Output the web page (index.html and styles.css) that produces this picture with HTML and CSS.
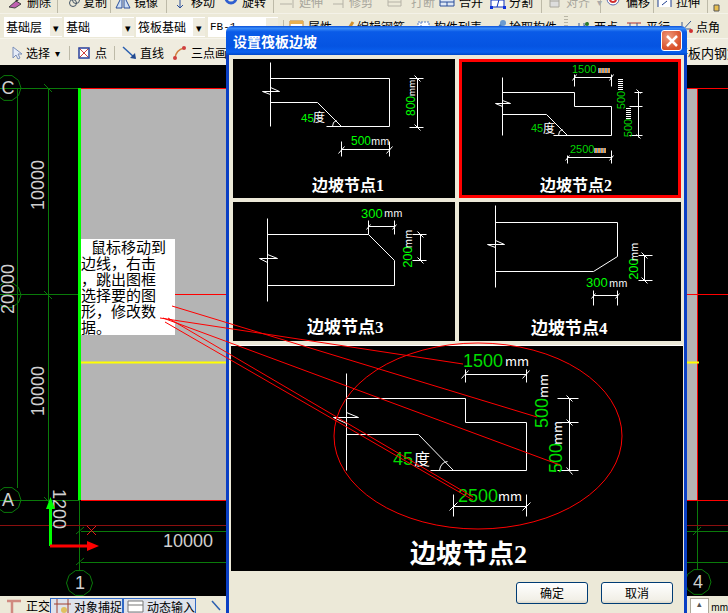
FILE: index.html
```html
<!DOCTYPE html>
<html lang="zh">
<head>
<meta charset="utf-8">
<title>设置筏板边坡</title>
<link rel="stylesheet" href="styles.css">
</head>
<body>
<div class="app">
  <div class="tb tb1">
    <div class="it"><svg width="17" height="14" viewBox="0 0 17 14"><path d="M2 12 L9 6 L14 9 L8 13Z" fill="#c060b0" stroke="#444"/><path d="M9 6 L14 2" stroke="#333" stroke-width="2"/></svg><span>删除</span></div><i class="sep s12"></i>
    <div class="it"><svg width="11" height="14" viewBox="0 0 11 14"><circle cx="4" cy="8" r="3.500" fill="none" stroke="#456"/><circle cx="7" cy="5" r="3.500" fill="none" stroke="#456"/></svg><span>复制</span></div><i class="sep s5"></i>
    <div class="it"><svg width="16" height="14" viewBox="0 0 16 14"><path d="M7 1 L1 13 H7Z M9 1 L15 13 H9Z" fill="#cfe0f5" stroke="#2a4f9a"/></svg><span>镜像</span></div><i class="sep s7"></i>
    <div class="it"><svg width="15" height="14" viewBox="0 0 15 14"><path d="M7 0 V13 M4 10 L7 13 L10 10 M1 4 H13" fill="none" stroke="#2a4f9a"/></svg><span>移动</span></div>
    <div class="it"><svg width="15" height="14" viewBox="0 0 15 14"><circle cx="7" cy="3" r="5" fill="none" stroke="#2f5fd0" stroke-width="3"/></svg><span>旋转</span></div><i class="sep s7"></i>
    <div class="it off"><svg width="16" height="14" viewBox="0 0 16 14"><path d="M0 4 H12 M0 9 H12 M13 0 V13" fill="none" stroke="#b5b2a6"/></svg><span>延伸</span></div>
    <div class="it off"><svg width="13" height="14" viewBox="0 0 13 14"><path d="M0 4 H10 M0 9 H10 M10 0 V13" fill="none" stroke="#b5b2a6"/></svg><span>修剪</span></div>
    <div class="it off"><svg width="21" height="14" viewBox="0 0 21 14"><path d="M1 3 H14 V11 H1Z M1 7 H14" fill="none" stroke="#b5b2a6"/></svg><span>打断</span></div>
    <div class="it"><svg width="17" height="14" viewBox="0 0 17 14"><path d="M1 4 H15 V11 H1Z M1 7 H15 M8 7 V11" fill="#dfe8f5" stroke="#2a4f9a"/></svg><span>合并</span></div>
    <div class="it"><svg width="17" height="14" viewBox="0 0 17 14"><path d="M2 5 H15 V12 H2Z M8 12 L11 1" fill="#fff" stroke="#1133bb"/><path d="M1 11h3v3h-3z M14 11h3v3h-3z" fill="#1133dd"/></svg><span>分割</span></div><i class="sep s7"></i>
    <div class="it off"><svg width="15" height="14" viewBox="0 0 15 14"><path d="M2 1 H11 V12 H2Z M2 6 H11" fill="#ddd" stroke="#a8a69c"/></svg><span>对齐</span><b class="mini">▾</b></div><i class="sep s6"></i>
    <div class="it"><svg width="17" height="14" viewBox="0 0 17 14"><circle cx="7" cy="4" r="6" fill="#fff" stroke="#5a6cb0"/><circle cx="7" cy="4" r="3" fill="none" stroke="#d03030" stroke-width="2"/></svg><span>偏移</span></div><i class="sep s4"></i>
    <div class="it"><svg width="16" height="14" viewBox="0 0 16 14"><path d="M1 12 V2 H14 V12" fill="#fff" stroke="#1f3f8f"/><path d="M5 10 L10 6" stroke="#1f3f8f"/></svg><span>拉伸</span></div><i class="sep s5"></i>
    <svg width="14" height="14" viewBox="0 0 14 14"><path d="M2 6h5v6H2z" fill="#e8c050" stroke="#555"/></svg>
  </div>

  <div class="tb tb2">
    <div class="sel s-a"><span>基础层</span><b>▾</b></div>
    <div class="sel s-b"><span>基础</span><b>▾</b></div>
    <div class="sel s-c"><span>筏板基础</span><b>▾</b></div>
    <div class="sel s-d"><span class="mono">FB-1</span><b>▾</b></div>
    <i class="sep s6"></i>
    <div class="it a1"><svg width="16" height="16" viewBox="0 0 16 16"><path d="M1 2h13v12H1z" fill="#fff" stroke="#c08030"/><path d="M1 2h13v3H1z" fill="#e9b050"/></svg><span>属性</span></div>
    <div class="it a2"><svg width="10" height="16" viewBox="0 0 10 16"><path d="M1 14 L8 3" stroke="#d09030" stroke-width="3"/></svg><span>编辑钢筋</span></div>
    <div class="it a3"><svg width="15" height="16" viewBox="0 0 15 16"><path d="M2 3h11v10H2z M5 3v10 M5 8h8" fill="#fff" stroke="#5a7ec0" stroke-dasharray="2 1"/></svg><span>构件列表</span></div>
    <div class="it a4"><svg width="12" height="16" viewBox="0 0 12 16"><path d="M1 14 L8 5" stroke="#3a6fb0" stroke-width="3"/><circle cx="9" cy="4" r="3" fill="#6a9ad0"/></svg><span>拾取构件</span></div>
    <i class="grip"></i>
    <div class="it a5"><svg width="15" height="16" viewBox="0 0 15 16"><path d="M3 4 V14 M8 4 V14 M0 11 H13 M2 14 L12 3" fill="none" stroke="#3a5a90"/><circle cx="11" cy="5" r="2" fill="#2a7a2a"/></svg><span>两点</span></div>
    <div class="it a6"><svg width="17" height="16" viewBox="0 0 17 16"><path d="M1 4 H15" stroke="#b03030"/><path d="M4 4 V14 M11 4 V14 M1 10 H15" stroke="#3a5a90" fill="none"/></svg><span>平行</span></div>
    <div class="it a7"><svg width="14" height="16" viewBox="0 0 14 16"><path d="M3 3 V14 M0 10 H12 M1 14 L12 2" fill="none" stroke="#3a5a90"/><circle cx="12" cy="12" r="2" fill="#d03030"/></svg><span>点角</span></div>
  </div>

  <div class="tb tb3">
    <div class="it b1"><svg width="16" height="16" viewBox="-3 0 16 16"><path d="M3 2 V13 L6 10 L8 14 L10 13 L8 9 H12Z" fill="#e6ecf8" stroke="#7a8fb8"/></svg><span>选择</span><b class="mini dark">▾</b></div><i class="sep s9"></i>
    <div class="it b2"><svg width="12" height="16" viewBox="0 0 12 16"><rect x="1" y="3" width="10" height="10" fill="#fff" stroke="#2a3f9a" stroke-width="1.500"/><path d="M2 4 L10 12 M10 4 L2 12" stroke="#d04040"/></svg><span>点</span></div><i class="sep s8"></i>
    <div class="it b3"><svg width="15" height="16" viewBox="0 0 15 16"><path d="M1 2 L13 13" stroke="#2a5fb0" stroke-width="1.500"/><path d="M14 14 L8 13 L13 8Z" fill="#234a90"/></svg><span>直线</span></div>
    <div class="it b4"><svg width="16" height="16" viewBox="0 0 16 16"><path d="M3 13 Q4 5 12 3" fill="none" stroke="#d08040" stroke-width="1.500"/><circle cx="3" cy="13" r="2" fill="#d04040"/><circle cx="12" cy="3" r="2" fill="#d04040"/></svg><span>三点画弧</span></div>
    <span class="cut">开板内钢筋</span>
  </div>

  <main class="canvas">
    <svg class="cad" width="728" height="531" viewBox="0 65 728 531">
      <defs>
        <polygon id="ring" points="13,0 10.500,7.600 4,12.400 -4,12.400 -10.500,7.600 -13,0 -10.500,-7.600 -4,-12.400 4,-12.400 10.500,-7.600"/>
      </defs>
      <rect class="gray" x="81" y="88" width="616" height="412"/>
      <g class="grid">
        <path d="M0 88.500H78 M0 294.500H80 M0 500.500H80 M17.500 88V488 M48.500 88V500 M79.500 500V571 M697.500 500V570 M81 531.500H728 M81 562.500H728"/>
        <path d="M44 84L52 92 M44 291L52 299 M44 497L52 505 M76 534L84 527 M76 565L84 558 M693 535L701 527"/>
      </g>
      <path class="dred" d="M0 525.500H728"/>
      <path class="red" d="M81 88.500H728 M81 294.500H728 M81 500.500H728 M697.500 88V500"/>
      <path class="yel" d="M81 362.500H699"/>
      <rect class="gbar" x="78" y="88" width="3" height="412"/>
      <g class="rings">
        <use href="#ring" x="8" y="88"/><use href="#ring" x="8" y="295"/><use href="#ring" x="8" y="500"/>
        <use href="#ring" x="79.500" y="583"/><use href="#ring" x="698" y="582"/>
      </g>
      <g class="cadtxt">
        <text x="38" y="185" transform="rotate(-90 38 185)" class="mid">10000</text>
        <text x="38" y="391" transform="rotate(-90 38 391)" class="mid">10000</text>
        <text x="8" y="289" transform="rotate(-90 8 289)" class="mid">20000</text>
        <text x="59" y="509" transform="rotate(90 59 509)" class="mid">1200</text>
        <text x="163" y="547">10000</text>
        <text x="8" y="94" class="ctr">C</text>
        <text x="8" y="506" class="ctr">A</text>
        <text x="80" y="589" class="ctr">1</text>
        <text x="698" y="588" class="ctr">4</text>
      </g>
      <path class="red xm" d="M87 526L96 535 M96 526L87 535"/>
      <rect class="gbar2" x="49" y="505" width="3" height="41"/>
      <path class="gbar2" d="M50.500 497L46 509H55Z"/>
      <rect class="rbar" x="50" y="544.500" width="38" height="3"/>
      <path class="rbar" d="M99 546L87 541V551Z"/>
    </svg>
    <div class="note"><span class="ind"></span>鼠标移动到<br>边线&#xFF0C;右击<br>&#xFF0C;跳出图框<br>选择要的图<br>形&#xFF0C;修改数<br>据&#x3002;</div>
  </main>

  <footer class="status">
    <div class="st"><svg width="17" height="14" viewBox="0 0 17 14"><path d="M1 2H15 M6 2V14" stroke="#d08a80" stroke-width="2.500" fill="none"/></svg><span>正交</span></div>
    <div class="st on"><svg width="17" height="14" viewBox="0 0 17 14"><path d="M3 0V14 M14 0V14 M0 5H17" stroke="#a04030" fill="none"/><circle cx="10" cy="11" r="3" fill="#e0c060"/></svg><span>对象捕捉</span></div>
    <div class="st on"><svg width="17" height="14" viewBox="0 0 17 14"><path d="M1 2H16V13H1Z M1 6H16" stroke="#777" fill="#fff"/></svg><span>动态输入</span></div>
    <svg class="st-ic" width="12" height="14" viewBox="0 0 12 14"><path d="M2 2L10 11" stroke="#2a5fb0" stroke-width="1.500"/></svg>
    <div class="spin"><b>▴</b></div><span class="unit">mm</span>
  </footer>
</div>

<section class="dlg">
  <header class="dlg-t"><span>设置筏板边坡</span><button class="x" aria-label="关闭"><svg width="14" height="14" viewBox="0 0 14 14"><path d="M2 2L12 12 M12 2L2 12" stroke="#fff" stroke-width="2.500"/></svg></button></header>
  <div class="dlg-b">
    <div class="thumbs">
      <div class="pn">
        <svg width="221" height="139" viewBox="233 59 221 139">
          <g class="w" transform="translate(.5 .5)"><path d="M270 62V126 M270 78H389V126H326 M270 102H317L341 126 M270 87L279 91H262L270 94 M332 126Q332 121 336 120 M341 141V156 M389 141V156 M341 149H389 M338 153L344 146 M386 153L392 146 M417 78V127 M409 78H423 M409 127H423 M414 75L420 81 M414 124L420 130"/></g>
          <text class="g" x="301" y="122" font-size="11.500">45</text><text class="t" x="313" y="122" font-size="12">度</text>
          <text class="g" x="351" y="145" font-size="12">500</text><text class="t" x="371" y="145" font-size="10">mm</text>
          <text class="g mid" x="411" y="106" font-size="12" transform="rotate(-90 411 106)">800</text>
          <text class="t mid" x="411" y="88" font-size="9" transform="rotate(-90 411 88)">mm</text>
          <text class="ti" x="312" y="191" font-size="16">边坡节点<tspan class="d">1</tspan></text>
        </svg>
      </div>
      <div class="pn act">
        <svg width="222" height="139" viewBox="459 59 222 139">
          <g class="w" transform="translate(.5 .5)"><path d="M502 77V135 M502 92H574V106H611V135H553 M502 114H546L567 135 M502 100L510 103H495L502 106 M558 135Q558 130 562 129 M574 74V86 M611 74V86 M574 77H611 M572 80L576 74 M609 80L613 74 M638 91V137 M634 92H642 M629 106H642 M629 135H642 M636 89L640 93 M636 134L640 138 M567 155V163 M611 150V163 M567 157H611 M565 160L569 155 M609 160L613 155"/></g>
          <text class="g2" x="572" y="73" font-size="11">1500</text><rect class="st1" x="598" y="68" width="12" height="5"/><path class="st1b" d="M598 70.500H610"/>
          <text class="g2" x="531" y="132" font-size="11">45</text><text class="t" x="543" y="133" font-size="12">度</text>
          <text class="g2" x="570" y="153" font-size="11">2500</text><rect class="st1" x="594" y="148" width="12" height="5"/><path class="st1b" d="M594 150.500H606"/>
          <text class="g2 mid" x="621" y="100" font-size="11" transform="rotate(-90 621 100)">500</text><path class="st2" d="M620.500 79V90"/>
          <text class="g2 mid" x="628" y="128" font-size="11" transform="rotate(-90 628 128)">500</text><path class="st2" d="M628.500 108V119"/>
          <text class="ti" x="540" y="191" font-size="16">边坡节点<tspan class="d">2</tspan></text>
        </svg>
      </div>
      <div class="pn">
        <svg width="222" height="139" viewBox="233 202 222 139">
          <g class="w" transform="translate(.5 .5)"><path d="M267 218V301 M267 234H368L394 260V285H267 M267 254L277 258H259L267 262 M368 220V234 M394 220V234 M368 226H394 M366 229L370 224 M392 229L396 224 M420 234V260 M412 234H426 M412 260H426 M417 231L423 237 M417 257L423 263"/></g>
          <text class="g" x="361" y="218" font-size="13">300</text><text class="t" x="384" y="217" font-size="10">mm</text>
          <text class="g mid" x="407" y="257" font-size="13" transform="rotate(-90 407 257)">200</text>
          <text class="t mid" x="407" y="239" font-size="10" transform="rotate(-90 407 239)">mm</text>
          <text class="ti" x="307" y="333" font-size="17">边坡节点<tspan class="d">3</tspan></text>
        </svg>
      </div>
      <div class="pn">
        <svg width="222" height="139" viewBox="459 202 222 139">
          <g class="w" transform="translate(.5 .5)"><path d="M495 205V287 M495 222H617V256L593 271H495 M495 240L504 244H487L495 247 M593 290V305 M617 290V305 M593 295H617 M591 298L595 293 M615 298L619 293 M644 255V280 M638 255H652 M638 280H652 M641 252L647 258 M641 277L647 283"/></g>
          <text class="g" x="586" y="287" font-size="13">300</text><text class="t" x="609" y="287" font-size="10">mm</text>
          <text class="g mid" x="633" y="269" font-size="13" transform="rotate(-90 633 269)">200</text>
          <text class="t mid" x="633" y="252" font-size="10" transform="rotate(-90 633 252)">mm</text>
          <text class="ti" x="531" y="334" font-size="17">边坡节点<tspan class="d">4</tspan></text>
        </svg>
      </div>
    </div>
    <div class="big">
      <svg width="452" height="225" viewBox="231 346 452 225">
        <g class="w" transform="translate(.5 .5)"><path d="M346 373V470 M346 398H465V422H526V470H430 M346 434H418L453 470 M346 412L358 417H333L346 423 M439 470Q440 462 447 461 M465 369V382 M526 369V382 M465 374H526 M461 378L468 370 M522 378L529 370 M569 398V470 M557 398H578 M557 422H578 M557 470H578 M566 395L572 401 M566 419L572 425 M566 467L572 474 M453 494V516 M526 494V516 M453 506H526 M449 510L457 502 M522 510L530 502"/></g>
        <text class="g3" x="463" y="367" font-size="18">1500</text><text class="t" x="505" y="366" font-size="13">mm</text>
        <text class="g3" x="393" y="465" font-size="18">45</text><text class="t" x="414" y="465" font-size="16">度</text>
        <text class="g3" x="458" y="502" font-size="18">2500</text><text class="t" x="498" y="501" font-size="13">mm</text>
        <text class="g3 mid" x="542" y="413" font-size="18" transform="rotate(-90 542 413)">500</text>
        <text class="t mid" x="542" y="386" font-size="13" transform="rotate(-90 542 386)">mm</text>
        <text class="g3 mid" x="556" y="458" font-size="18" transform="rotate(-90 556 458)">500</text>
        <text class="t mid" x="556" y="433" font-size="13" transform="rotate(-90 556 433)">mm</text>
        <text class="ti" x="410" y="563" font-size="26">边坡节点<tspan class="d">2</tspan></text>
      </svg>
    </div>
    <div class="acts"><button class="btn">确定</button><button class="btn">取消</button></div>
  </div>
</section>

<svg class="marks" width="728" height="613" viewBox="0 0 728 613">
  <path d="M172 306L537 417 M160 318L463 364 M163 318L560 465 M165 322L473 500 M168 318L473 497"/>
  <ellipse cx="478" cy="436" rx="144" ry="93"/>
</svg>
</body>
</html>
```

FILE: styles.css
```css
* { box-sizing: border-box; }
html, body { margin: 0; height: 613px; overflow: hidden; background: #ece9d8; }
body { font-family: "Noto Sans CJK SC", "Liberation Sans", sans-serif; font-size: 12px; color: #000; position: relative; }
svg { display: block; flex: none; }
button { font: inherit; padding: 0; }

.app { display: flex; flex-direction: column; width: 728px; height: 613px; }

.tb { display: flex; align-items: center; background: #ece9d8; overflow: hidden; flex: none; }
.tb1 { height: 14px; padding-left: 7px; align-items: flex-end; border-bottom: 1px solid #f4f2e8; }
.tb2 { height: 24px; padding: 1px 0 0 4px; }
.tb3 { height: 27px; padding-top: 1px; background: #efecdf; border-top: 1px solid #f6f4ec; }

.it { display: flex; align-items: center; gap: 3px; flex: none; white-space: nowrap; line-height: 14px; }
.tb1 .it { height: 16px; margin-bottom: -2px; margin-top: 0; width: 50px; transform: translateY(-5px); }
.tb1 .it:nth-child(3) { width: 41px; }
.tb1 .it:nth-child(5) { width: 51px; }
.tb1 .it:nth-child(7) { width: 51px; }
.tb1 .it:nth-child(8) { width: 49px; }
.tb1 .it:nth-child(10) { width: 53px; }
.tb1 .it:nth-child(11) { width: 54px; }
.tb1 .it:nth-child(12) { width: 52px; }
.tb1 .it:nth-child(13) { width: 50px; }
.tb1 .it:nth-child(14) { width: 52px; }
.tb1 .it:nth-child(16) { width: 52px; }
.tb1 .it:nth-child(18) { width: 47px; }
.tb1 .it:nth-child(20) { width: 50px; }
.off { color: #a8a69c; }
.mini { font-size: 10px; font-weight: 400; margin-left: 4px; color: #aaa; }
.mini.dark { color: #000; margin-left: 2px; }

.sep { display: block; flex: none; height: 14px; border-left: 1px solid #bdbaa8; }
.s4 { width: 4px; } .s5 { width: 5px; } .s6 { width: 6px; } .s7 { width: 7px; }
.s8 { width: 8px; } .s9 { width: 9px; } .s12 { width: 12px; }

.sel { display: flex; align-items: center; justify-content: space-between; height: 20px; background: #fff; margin-right: 2px; padding-left: 2px; flex: none; font-size: 12px; }
.sel b { display: flex; align-items: center; justify-content: center; width: 12px; height: 18px; background: #efecdf; font-size: 11px; font-weight: 400; }
.mono { font-family: "Liberation Mono", monospace; font-size: 11px; }
.s-a { width: 58px; }
.s-b { width: 70px; }
.s-c { width: 69px; margin-right: 3px; }
.s-d { width: 70px; margin-right: 5px; }
.a1 { margin-right: 13px; }
.a2 { margin-right: 11px; gap: 2px; }
.a3 { margin-right: 12px; }
.a4 { margin-right: 7px; }
.grip { display: block; width: 4px; height: 22px; margin-right: 8px; flex: none; background: repeating-linear-gradient(#b8b5a5 0 1px, transparent 1px 3px); }
.a5 { margin-right: 8px; }
.a6 { margin-right: 9px; }
.tb3 { padding-left: 7px; }
.b1 { width: 62px; }
.b2 { width: 36px; gap: 5px; }
.b3 { width: 50px; }
.b4 { width: 67px; }
.cut { margin-left: 436px; white-space: nowrap; flex: none; font-size: 13px; }

.canvas { position: relative; flex: 1; background: #000; min-height: 0; overflow: hidden; }
.cad { position: absolute; left: 0; top: 0; }
.gray { fill: #b4b4b4; }
.grid path { stroke: #0a7a0a; fill: none; stroke-width: 1; }
.dred { stroke: #8a0f0f; fill: none; }
.red { stroke: #ff0000; fill: none; }
.xm { stroke: #e01818; }
.yel { stroke: #ffff00; stroke-width: 2; fill: none; }
.gbar { fill: #00ff00; }
.gbar2 { fill: #00ff00; }
.rbar { fill: #ff0000; }
.rings use { fill: none; stroke: #0a7a0a; }
.cadtxt text { font-family: "Liberation Sans", sans-serif; font-size: 18px; fill: #cfcfcf; }
.cadtxt .ctr { text-anchor: middle; }
.mid { text-anchor: middle; dominant-baseline: central; }

.note { position: absolute; left: 81px; top: 174px; width: 94px; height: 96px; background: #fff; font-size: 15px; line-height: 16px; color: #000; white-space: nowrap; overflow: hidden; }
.ind { display: inline-block; width: 10px; }

.status { display: flex; align-items: flex-end; flex: none; height: 17px; background: #ece9d8; padding-left: 6px; }
.st { display: flex; align-items: center; gap: 3px; height: 14px; white-space: nowrap; }
.st:first-child { width: 48px; height: 15px; }
.st.on { width: 75px; height: 15px; padding-left: 3px; background: #dfe3ec; border: 1px solid #3169c6; border-bottom: 0; }
.st-ic { margin-left: 14px; }
.spin { margin-left: 468px; width: 21px; height: 15px; background: #fff; border: 1px solid #aca899; border-bottom: 0; text-align: center; font-size: 9px; line-height: 10px; color: #555; }
.spin b { font-weight: 400; }
.unit { font-family: "Liberation Sans", sans-serif; font-size: 10px; margin-left: 2px; }

.dlg { position: absolute; left: 226px; top: 26px; width: 461px; height: 587px; display: flex; flex-direction: column; background: #ece9d8; border-radius: 6px 6px 0 0; overflow: hidden; }
.dlg-t { flex: none; display: flex; align-items: center; justify-content: space-between; height: 29px; padding: 0 5px 0 7px; color: #fff; font-size: 14px; font-weight: 700; background: linear-gradient(#0a4fd8 0, #3a8cf8 8%, #0a5be8 20%, #0554e2 70%, #0a60ee 90%, #0047c8 100%); }
.x { display: flex; align-items: center; justify-content: center; width: 21px; height: 21px; background: radial-gradient(circle at 35% 30%, #ee9a7c, #d9502a 70%); border: 1px solid #fff; border-radius: 3px; }
.dlg-b { flex: 1; min-height: 0; display: flex; flex-direction: column; margin: 0 3px; background: #ece9d8; padding: 4px 0 0 4px; position: relative; }
.dlg::before, .dlg::after { content: ""; position: absolute; top: 29px; bottom: 0; width: 3px; background: #0a3fc4; }
.dlg::before { left: 0; }
.dlg::after { right: 0; }
.thumbs { display: grid; grid-template-columns: 222px 222px; grid-auto-rows: 139px; gap: 4px; }
.pn { background: #000; overflow: hidden; }
.pn.act { position: relative; isolation: isolate; box-shadow: inset 0 0 0 3px #ff0000; }
.pn.act svg { position: relative; z-index: -1; }
.big { width: 452px; height: 226px; margin: 4px 0 0 -2px; background: #000; border-top: 1px solid #fff; overflow: hidden; }
.w path { stroke: #fff; fill: none; stroke-width: 1; }
.pn text, .big text { font-family: "Liberation Sans", sans-serif; }
.g { fill: #00ff00; }
.g2 { fill: #00d400; }
.g3 { fill: #00dc00; }
.pn .t, .big .t { fill: #fff; font-family: "Noto Sans CJK SC", sans-serif; }
.pn .ti, .big .ti { fill: #fff; font-weight: 700; font-family: "Noto Sans CJK SC", sans-serif; }
.pn .d, .big .d { font-family: "Liberation Serif", serif; }
.st1 { fill: #e09a50; }
.st1b { fill: none; stroke: #5a9bd8; stroke-width: 5; stroke-dasharray: 1 2; }
.st2 { fill: none; stroke: #ffffff; stroke-width: 5; stroke-dasharray: 1 1; }

.acts { flex: 1; display: flex; align-items: flex-start; justify-content: flex-end; gap: 13px; padding: 11px 11px 0 0; }
.btn { width: 72px; height: 22px; background: linear-gradient(#ffffff, #f1efe6 85%, #dcd8ca); border: 1px solid #003c74; border-radius: 3px; font-size: 12px; color: #000; line-height: 18px; }

.marks { position: absolute; left: 0; top: 0; pointer-events: none; }
.marks path, .marks ellipse { fill: none; stroke: #ff0000; stroke-width: 1; }
```
